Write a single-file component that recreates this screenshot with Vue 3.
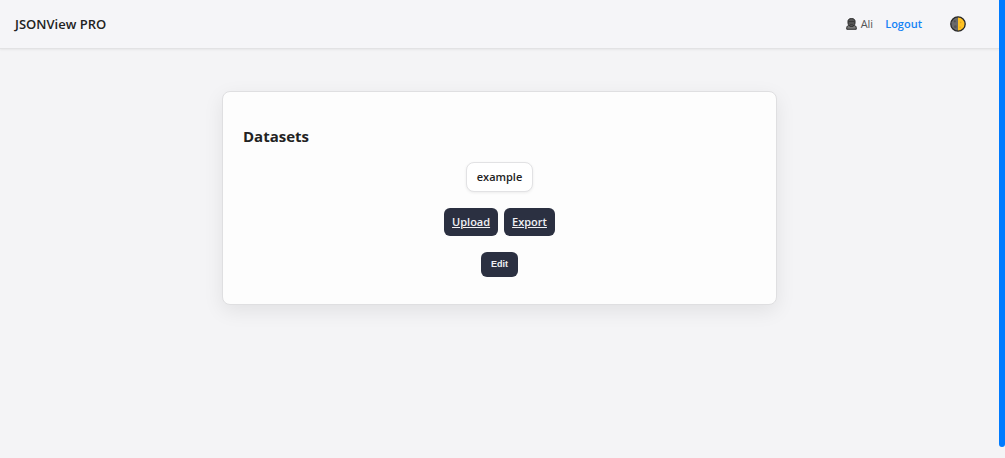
<template>
  <div class="app">
    <div class="page">
      <header class="navbar">
        <span class="navbar__brand">JSONView PRO</span>
        <nav class="navbar__menu">
          <span class="navbar__user">
            <svg class="navbar__avatar" viewBox="0 0 22 24" aria-hidden="true">
              <path d="M1.5 22.5v-3c0-3 2-4.5 5-4.5h9c3 0 5 1.5 5 4.5v3z" fill="#7a7a7a" stroke="#292929" stroke-width="2" stroke-linejoin="round" />
              <path d="M4 6c0-3 3-5 7-5s7 2 7 5v4c0 4-3 7-7 7s-7-3-7-7z" fill="#555" stroke="#292929" stroke-width="2" />
              <path d="M5 7h12" stroke="#3a3a3a" stroke-width="2" />
              <path d="M8 13h6" stroke="#3a3a3a" stroke-width="1.5" />
            </svg>
            {{ username }}
          </span>
          <a class="navbar__logout" href="#">Logout</a>
          <button class="navbar__theme" type="button" aria-label="Toggle theme" @click="dark = !dark">
            <svg viewBox="0 0 30 30" aria-hidden="true">
              <circle cx="15" cy="15" r="13.5" fill="#6a6a6a" />
              <path d="M15 1.5a13.5 13.5 0 0 1 0 27z" fill="#ffc223" />
              <circle cx="9" cy="10" r="2" fill="#505050" />
              <circle cx="10" cy="20" r="2.5" fill="#555" />
              <circle cx="20" cy="12" r="1.5" fill="#e5a51b" />
              <circle cx="19" cy="21" r="1.5" fill="#e5a51b" />
              <circle cx="15" cy="15" r="13.5" fill="none" stroke="#292929" stroke-width="2.5" />
            </svg>
          </button>
        </nav>
      </header>

      <main class="card">
        <h2 class="card__title">Datasets</h2>
        <ul class="datasets">
          <li v-for="name in datasets" :key="name">
            <a class="datasets__item" href="#">{{ name }}</a>
          </li>
        </ul>
        <div class="actions">
          <a class="btn" href="#">Upload</a>
          <a class="btn" href="#">Export</a>
        </div>
        <button class="btn btn--small" type="button">Edit</button>
      </main>
    </div>

    <div class="scrollbar">
      <div class="scrollbar__thumb"></div>
    </div>
  </div>
</template>

<script setup>
import { ref } from 'vue'

const username = ref('Ali')
const datasets = ref(['example'])
const dark = ref(false)
</script>

<style>
body {
  margin: 0;
  background: #f4f4f6;
}
</style>

<style scoped>
.app {
  display: flex;
  min-height: 100vh;
  font-family: 'Segoe UI', 'Open Sans', 'Noto Sans', sans-serif;
  font-size: 11px;
  line-height: 16px;
  color: #222;
  background: #f4f4f6;
}

.page {
  flex: 1;
}

/* Navbar */
.navbar {
  display: flex;
  align-items: center;
  justify-content: space-between;
  box-sizing: border-box;
  height: 49px;
  padding: 0 33px 0 15px;
  background: #f5f5f8;
  border-bottom: 1px solid #e2e2e4;
  box-shadow: 0 1px 2px rgba(0, 0, 0, 0.06);
}

.navbar__brand {
  font-size: 13px;
  font-weight: 600;
}

.navbar__menu {
  display: flex;
  align-items: center;
}

.navbar__user {
  display: flex;
  align-items: center;
  gap: 4px;
  margin-right: 12px;
  color: #555;
}

.navbar__avatar {
  width: 11px;
  height: 12px;
}

.navbar__logout {
  margin-right: 28px;
  font-weight: 600;
  color: #1683f5;
  text-decoration: none;
}

.navbar__theme {
  display: flex;
  padding: 0;
  border: none;
  background: none;
  cursor: pointer;
}

.navbar__theme svg {
  width: 16px;
  height: 16px;
}

/* Card */
.card {
  display: flex;
  flex-direction: column;
  align-items: center;
  gap: 16px;
  box-sizing: border-box;
  max-width: 555px;
  margin: 42px auto 0;
  padding: 34px 20px 27px;
  background: #fdfdfd;
  border: 1px solid #dfdfe1;
  border-radius: 8px;
  box-shadow: 0 6px 20px rgba(0, 0, 0, 0.08);
}

.card__title {
  align-self: stretch;
  margin: 0;
  font-size: 15px;
  line-height: 20px;
  font-weight: 700;
}

.datasets {
  margin: 0;
  padding: 0;
  list-style: none;
}

.datasets__item {
  display: block;
  padding: 6px 10px;
  background: #fff;
  border: 1px solid #e2e2e4;
  border-radius: 8px;
  box-shadow: 0 1px 3px rgba(0, 0, 0, 0.07);
  font-weight: 600;
  color: #222;
  text-decoration: none;
}

.actions {
  display: flex;
  gap: 6px;
}

.btn {
  padding: 6px 8px;
  border: none;
  border-radius: 6px;
  background: #2b3041;
  font-weight: 600;
  color: #f0f0f4;
  cursor: pointer;
}

.btn--small {
  padding: 6px 10px;
  font-family: Arial, 'Liberation Sans', sans-serif;
  font-size: 9px;
  line-height: 13px;
  font-weight: 700;
}

/* Scrollbar */
.scrollbar {
  width: 6px;
}

.scrollbar__thumb {
  height: calc(100% - 11px);
  background: #007bff;
  border-radius: 0 0 3px 3px;
}
</style>
